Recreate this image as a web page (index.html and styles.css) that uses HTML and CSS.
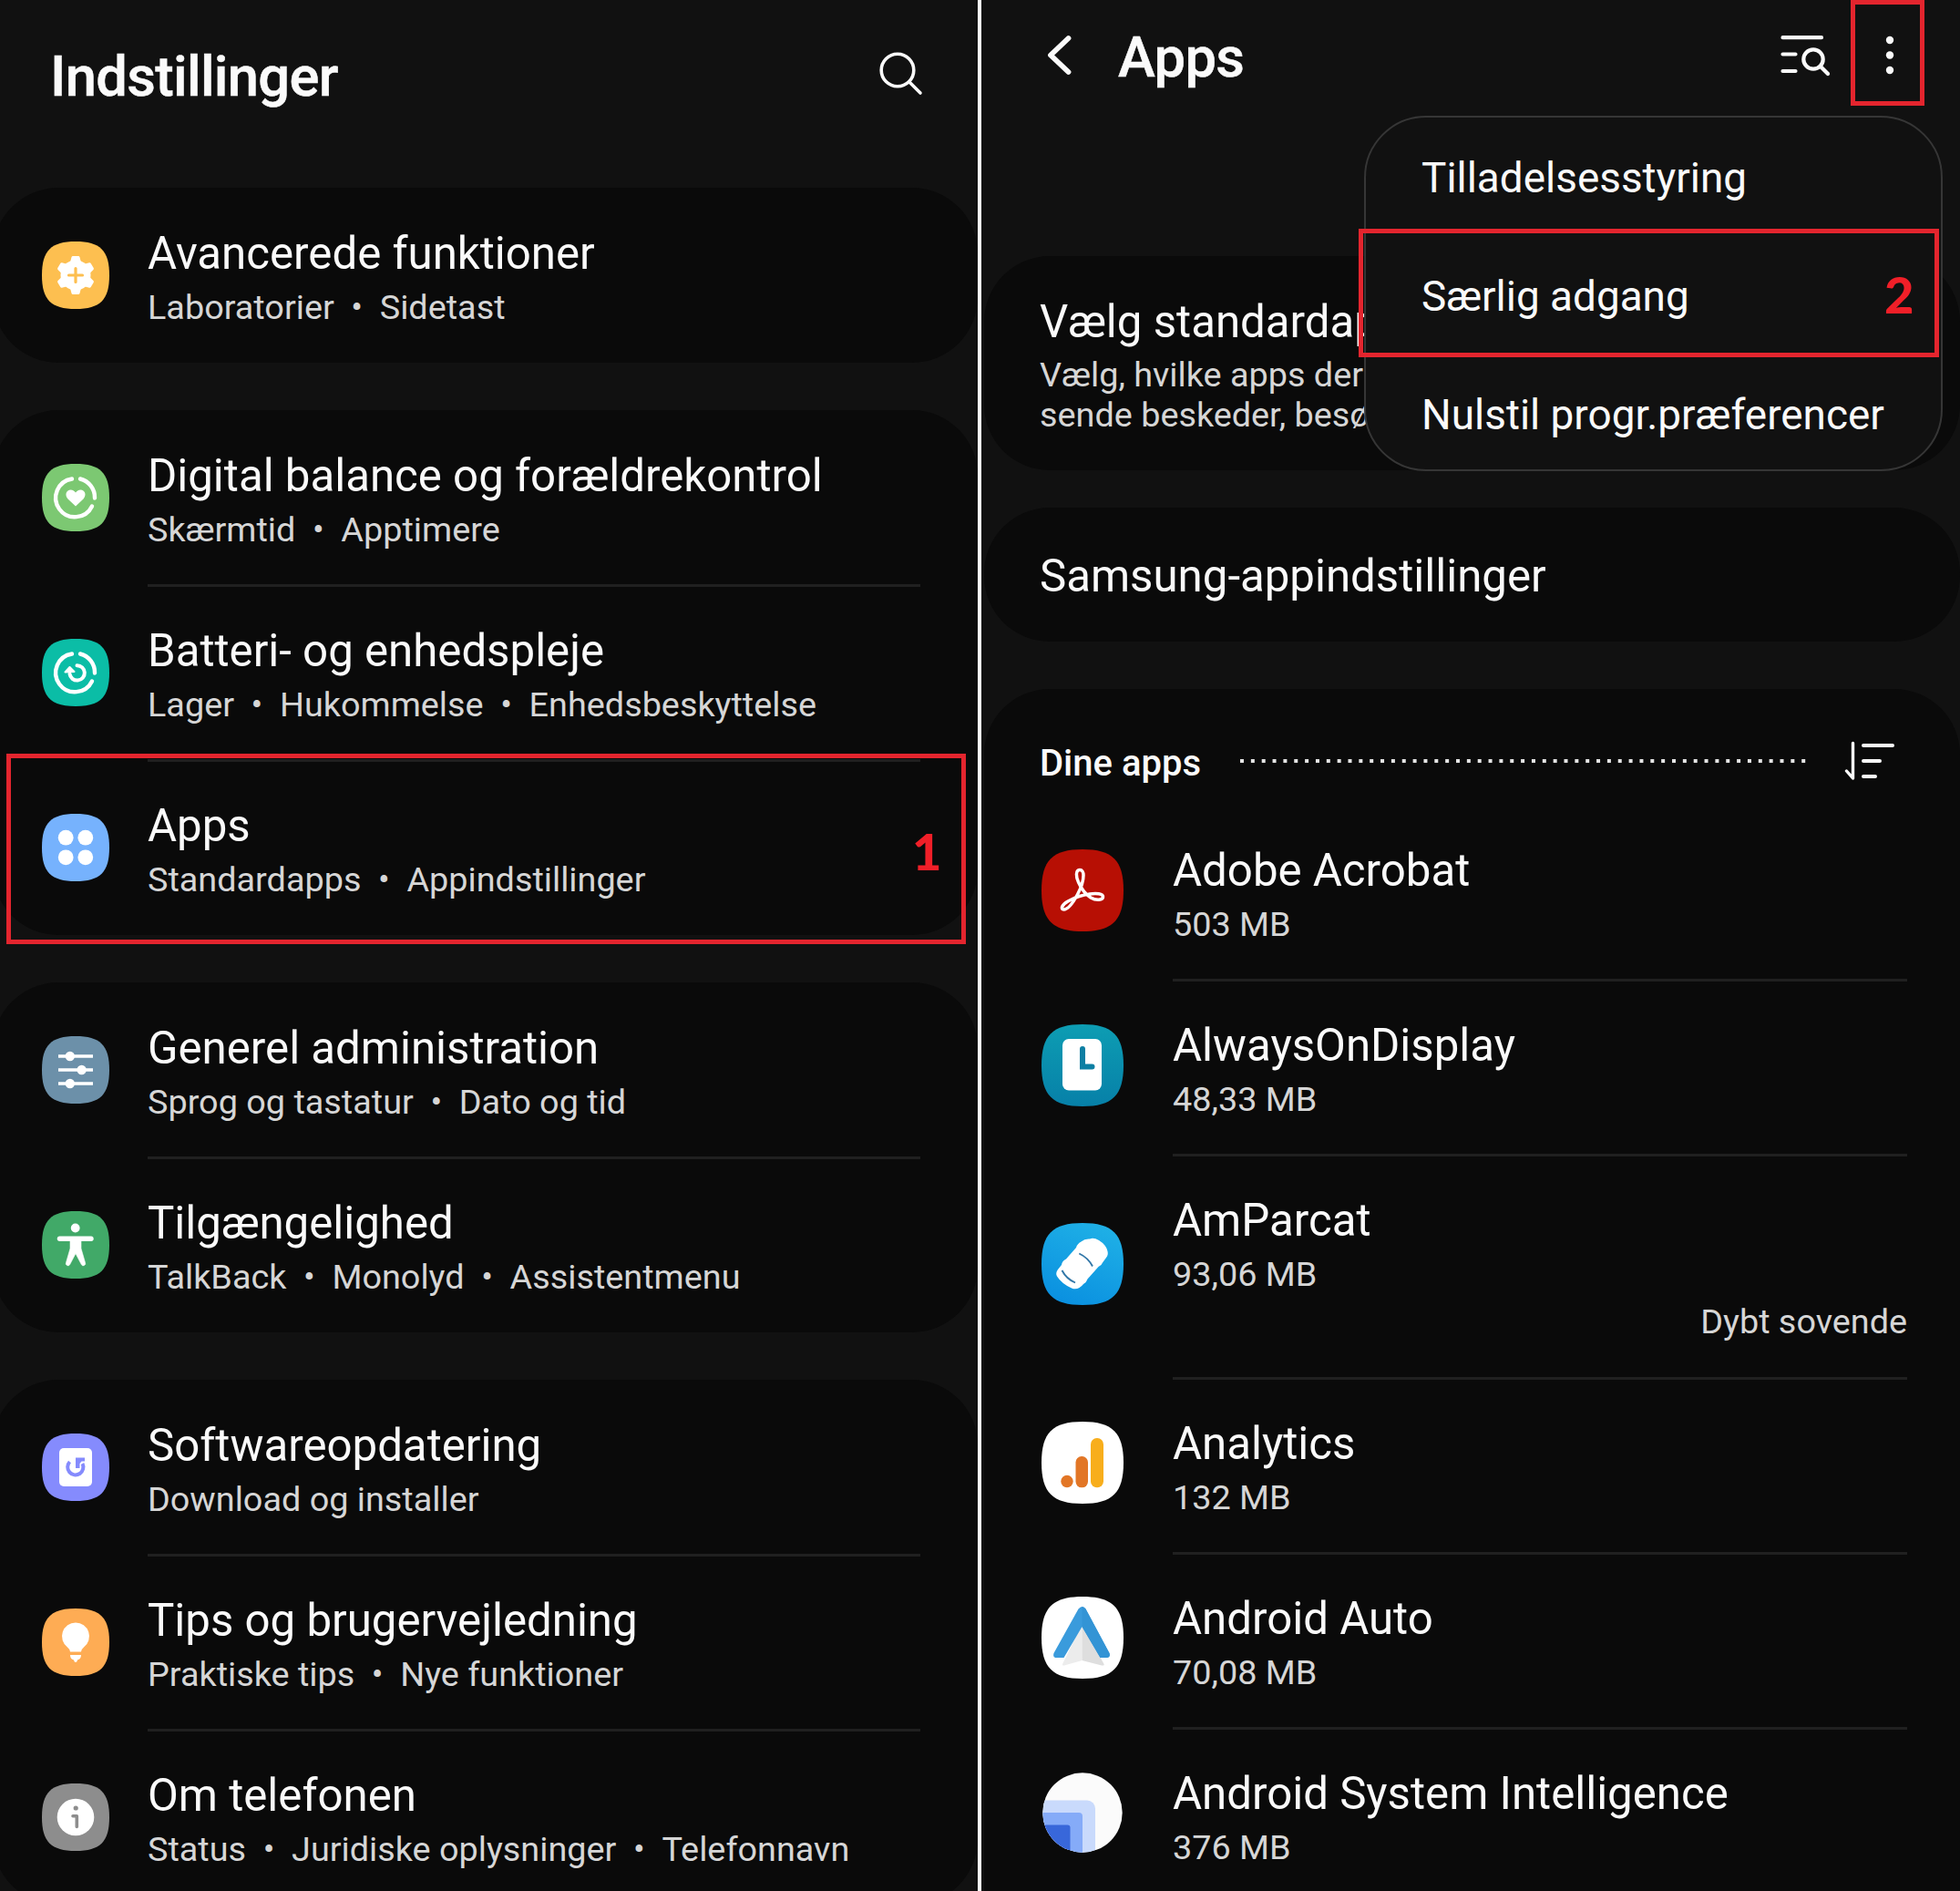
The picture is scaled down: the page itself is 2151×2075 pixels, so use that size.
FILE: index.html
```html
<!DOCTYPE html>
<html lang="da">
<head>
<meta charset="utf-8">
<title>Indstillinger</title>
<link rel="stylesheet" href="styles.css">
</head>
<body>
<svg class="defs" width="0" height="0" aria-hidden="true">
  <defs>
    <symbol id="tile" viewBox="0 0 74 74"><path d="M37 0C64 0 74 10 74 37S64 74 37 74 0 64 0 37 10 0 37 0z"/></symbol>
    <linearGradient id="aod" x1="0" y1="0" x2="0" y2="1"><stop offset="0" stop-color="#0d9db3"/><stop offset="1" stop-color="#0780a8"/></linearGradient>
    <linearGradient id="car" x1="0.7" y1="0" x2="0.3" y2="1"><stop offset="0" stop-color="#1fb0e6"/><stop offset="1" stop-color="#0a90e0"/></linearGradient>
    <clipPath id="round"><circle cx="45" cy="45" r="43.7"/></clipPath>
  </defs>
</svg>
<main class="screens">
  <section class="pane settings">
    <header class="bar">
      <h1 class="heading">Indstillinger</h1>
      <svg class="search" width="48" height="48" viewBox="0 0 48 48" fill="none" stroke="#fafafa" stroke-width="3.6" stroke-linecap="round"><circle cx="20" cy="20" r="17.8"/><path d="M33 33L45 45"/></svg>
    </header>

    <div class="card">
      <div class="row">
        <svg class="icon" viewBox="0 0 74 74"><use href="#tile" fill="#fdbf50"/><circle cx="37" cy="37" r="16.500" fill="#fff"/><path d="M34 17.500H40L42 25H32zM34 56.500H40L42 49H32z" fill="#fff" stroke="#fff" stroke-width="3" stroke-linejoin="round"/><path d="M34 17.500H40L42 25H32zM34 56.500H40L42 49H32z" transform="rotate(60 37 37)" fill="#fff" stroke="#fff" stroke-width="3" stroke-linejoin="round"/><path d="M34 17.500H40L42 25H32zM34 56.500H40L42 49H32z" transform="rotate(120 37 37)" fill="#fff" stroke="#fff" stroke-width="3" stroke-linejoin="round"/><path d="M37 29.500V44.500M29.500 37H44.500" stroke="#fdbf50" stroke-width="3.200" stroke-linecap="round"/></svg>
        <div class="body"><p class="title">Avancerede funktioner</p><p class="sub">Laboratorier<i>•</i>Sidetast</p></div>
      </div>
    </div>

    <div class="card">
      <div class="row">
        <svg class="icon" viewBox="0 0 74 74"><use href="#tile" fill="#7cc872"/><g fill="none" stroke="#fff" stroke-width="4.400" stroke-linecap="round"><path d="M42 16.500A21 21 0 0 1 58 37.500M55 46.500A21 21 0 1 1 33 16.500"/></g><path d="M37 46.500L28.500 38.500C24.500 34 27 28.500 31.500 28.500C34 28.500 36 30 37 31.500C38 30 40 28.500 42.500 28.500C47 28.500 49.500 34 45.500 38.500z" fill="#fff"/></svg>
        <div class="body"><p class="title">Digital balance og forældrekontrol</p><p class="sub">Skærmtid<i>•</i>Apptimere</p></div>
      </div>
      <div class="row">
        <svg class="icon" viewBox="0 0 74 74"><use href="#tile" fill="#0bbda6"/><g fill="none" stroke="#fff" stroke-width="4.400" stroke-linecap="round"><path d="M42 16.500A21 21 0 0 1 58 37.500M55 46.500A21 21 0 1 1 33 16.500"/><path d="M38.500 29.200A8.200 8.200 0 1 1 30.500 38.500" stroke-width="4"/></g><path d="M25.500 36.500L30.500 31L35.500 36z" fill="#fff" stroke="#fff" stroke-width="2" stroke-linejoin="round"/></svg>
        <div class="body"><p class="title">Batteri- og enhedspleje</p><p class="sub">Lager<i>•</i>Hukommelse<i>•</i>Enhedsbeskyttelse</p></div>
      </div>
      <div class="row">
        <svg class="icon" viewBox="0 0 74 74"><use href="#tile" fill="#76b2fd"/><g fill="#fff"><circle cx="26.200" cy="26.200" r="8.400"/><circle cx="47.800" cy="26.200" r="8.400"/><circle cx="26.200" cy="47.800" r="8.400"/><circle cx="47.800" cy="47.800" r="8.400"/></g></svg>
        <div class="body"><p class="title">Apps</p><p class="sub">Standardapps<i>•</i>Appindstillinger</p></div>
      </div>
    </div>

    <div class="card">
      <div class="row">
        <svg class="icon" viewBox="0 0 74 74"><use href="#tile" fill="#6c90a9"/><path d="M18 22H56M18 37H56M18 52H56" stroke="#fff" stroke-width="3.400"/><g fill="#fff"><circle cx="30.800" cy="22" r="5.200"/><circle cx="43.600" cy="37" r="5.200"/><circle cx="30.800" cy="52" r="5.200"/></g></svg>
        <div class="body"><p class="title">Generel administration</p><p class="sub">Sprog og tastatur<i>•</i>Dato og tid</p></div>
      </div>
      <div class="row">
        <svg class="icon" viewBox="0 0 74 74"><use href="#tile" fill="#41a968"/><circle cx="36.700" cy="18.500" r="4.900" fill="#fff"/><path d="M19.500 30.300H54" stroke="#fff" stroke-width="5.400" stroke-linecap="round"/><path d="M31 30H43V41L47.500 56.500A2.300 2.300 0 0 1 43.300 58.500L37 46.500L30.700 58.500A2.300 2.300 0 0 1 26.500 56.500L31 41z" fill="#fff" stroke="#fff" stroke-width=".6" stroke-linejoin="round"/></svg>
        <div class="body"><p class="title">Tilgængelighed</p><p class="sub">TalkBack<i>•</i>Monolyd<i>•</i>Assistentmenu</p></div>
      </div>
    </div>

    <div class="card">
      <div class="row">
        <svg class="icon" viewBox="0 0 74 74"><use href="#tile" fill="#858bfd"/><rect x="19" y="16" width="36" height="42" rx="5" fill="#fff"/><path d="M30.500 31A8.600 8.600 0 1 0 44.500 33" fill="none" stroke="#858bfd" stroke-width="4"/><path d="M37 26.500H47V30.500H43.500L41.500 33V38H37z" fill="#858bfd"/></svg>
        <div class="body"><p class="title">Softwareopdatering</p><p class="sub">Download og installer</p></div>
      </div>
      <div class="row">
        <svg class="icon" viewBox="0 0 74 74"><use href="#tile" fill="#feac54"/><path d="M37 15.500A15 15 0 0 1 46 42.500Q43 45 43 47.500H31Q31 45 28 42.500A15 15 0 0 1 37 15.500z" fill="#fff"/><path d="M31 51H43Q43 55.500 39 56.500Q38.500 59 37 59T35 56.500Q31 55.500 31 51z" fill="#fff"/></svg>
        <div class="body"><p class="title">Tips og brugervejledning</p><p class="sub">Praktiske tips<i>•</i>Nye funktioner</p></div>
      </div>
      <div class="row">
        <svg class="icon" viewBox="0 0 74 74"><use href="#tile" fill="#8d8d8d"/><circle cx="37" cy="37" r="20.300" fill="#fff"/><circle cx="37.200" cy="27" r="2.600" fill="#8d8d8d"/><path d="M34 35.800H38.300V47.500" fill="none" stroke="#8d8d8d" stroke-width="3.600" stroke-linecap="round" stroke-linejoin="round"/></svg>
        <div class="body"><p class="title">Om telefonen</p><p class="sub">Status<i>•</i>Juridiske oplysninger<i>•</i>Telefonnavn</p></div>
      </div>
    </div>

    <div class="mark mark-apps"><span>1</span></div>
  </section>

  <section class="pane apps">
    <header class="bar">
      <svg class="back" width="32" height="46" viewBox="0 0 32 46" fill="none" stroke="#fafafa" stroke-width="5.8" stroke-linecap="round" stroke-linejoin="round"><path d="M25.500 4L6 22.500L25.500 41"/></svg>
      <h2 class="heading">Apps</h2>
      <svg class="find" width="56" height="46" viewBox="0 0 56 46" fill="none" stroke="#fafafa" stroke-width="4.200" stroke-linecap="round"><path d="M3.500 3.200H46M3.500 21.500H17.500M3.500 40H17.500"/><circle cx="37" cy="27" r="10.700"/><path d="M45 35L53 43"/></svg>
      <svg class="more" width="10" height="44" viewBox="0 0 10 44" fill="#fafafa"><circle cx="5" cy="5" r="4.200"/><circle cx="5" cy="21.500" r="4.200"/><circle cx="5" cy="38" r="4.200"/></svg>
    </header>

    <div class="card plain defaults">
      <p class="title">Vælg standardapps</p>
      <p class="sub">Vælg, hvilke apps der<br>sende beskeder, besøge</p>
    </div>
    <div class="card plain samsung"><p class="title">Samsung-appindstillinger</p></div>

    <div class="card list">
      <div class="list-head">
        <h3 class="list-title">Dine apps</h3>
        <svg class="dots" width="622" height="4" viewBox="0 0 622 4"><path d="M0 2H622" stroke="#e4e4e4" stroke-width="4" stroke-dasharray="4 7.850"/></svg>
        <svg class="sort" width="56" height="44" viewBox="0 0 56 44" fill="none" stroke="#fafafa" stroke-width="4" stroke-linecap="round" stroke-linejoin="round"><path d="M2.500 33L9.500 41V2.500" stroke-width="3.400"/><path d="M21 5H53M21 22H39M21 39H34"/></svg>
      </div>
      <div class="row">
        <svg class="icon" viewBox="0 0 90 90"><use href="#tile" width="90" height="90" fill="#b70f04"/><path d="M42 22.500C37 22.500 38 31 40.500 36C44 44 48 49 54 53C60 56.500 67.500 56 67.500 52C67.500 48.500 60 48 53 49C45 50 36 53 29 57C22 61 20.500 66 24.500 66C30 66 36 56 39.500 49.500C43 43 46 34 46 28.500C46 25 44.500 22.500 42 22.500z" fill="none" stroke="#fff" stroke-width="3.500" stroke-linejoin="round"/></svg>
        <div class="body"><p class="title">Adobe Acrobat</p><p class="sub">503 MB</p></div>
      </div>
      <div class="row">
        <svg class="icon" viewBox="0 0 90 90"><use href="#tile" width="90" height="90" fill="url(#aod)"/><rect x="23" y="16" width="43" height="56.500" rx="7" fill="#fff"/><path d="M45 27V46.500H55.500" fill="none" stroke="#0d7fa3" stroke-width="6" stroke-linecap="round"/></svg>
        <div class="body"><p class="title">AlwaysOnDisplay</p><p class="sub">48,33 MB</p></div>
      </div>
      <div class="row tall">
        <svg class="icon" viewBox="0 0 90 90"><use href="#tile" width="90" height="90" fill="url(#car)"/><path d="M53 17.500Q57 15.500 63 19Q71 24 72.500 31Q73.500 35 71 38L67 43.500Q66 46.500 62.500 48L50.500 61.500Q49.500 65 46 67Q40 74.500 33 71.500Q22 66.500 17 58.500Q15 55 18 51L22 46Q22.500 41.500 27 39.500L38 27Q39 23 43.500 20.500Q47.500 17 53 17.500Z" fill="#fff"/><path d="M41.300 33.500Q51 38 56 47.500M22.500 52Q27 61 37 65.500" fill="none" stroke="#3277a8" stroke-width="1.900"/></svg>
        <div class="body"><p class="title">AmParcat</p><p class="sub">93,06 MB</p><p class="sub state">Dybt sovende</p></div>
      </div>
      <div class="row">
        <svg class="icon" viewBox="0 0 90 90"><use href="#tile" width="90" height="90" fill="#fff"/><circle cx="28" cy="65.500" r="6.700" fill="#e27626"/><rect x="37.500" y="38" width="13.500" height="34.300" rx="6.500" fill="#e27626"/><rect x="54" y="18" width="14" height="54.300" rx="6.800" fill="#f8ae1c"/></svg>
        <div class="body"><p class="title">Analytics</p><p class="sub">132 MB</p></div>
      </div>
      <div class="row">
        <svg class="icon" viewBox="0 0 90 90"><use href="#tile" width="90" height="90" fill="#fff"/><path d="M44.500 30V70L25 75.500Q22 76 23.500 73z" fill="#ececec"/><path d="M44.500 30V70L66 75.500Q70 76 68 73z" fill="#dedede"/><path d="M40.500 13.500Q44.500 8.500 48.500 13.500L74.500 62Q76 67 71 67H64.500L44.500 33L24.500 67H16.500Q12 67 13.500 62z" fill="#3a9bdc"/><path d="M44.500 11Q47 11 48.500 13.500L74.500 62Q76 67 71 67H64.500L44.500 33z" fill="#3394d5"/></svg>
        <div class="body"><p class="title">Android Auto</p><p class="sub">70,08 MB</p></div>
      </div>
      <div class="row">
        <svg class="icon" viewBox="0 0 90 90"><g clip-path="url(#round)"><rect width="90" height="90" fill="#fbfbfb"/><rect x="-20" y="31.500" width="79" height="90" rx="9" fill="#c9dafc"/><rect x="-20" y="45" width="65" height="80" rx="4" fill="#85abf8"/><rect x="-20" y="58.500" width="51.500" height="70" rx="3" fill="#3867da"/></g></svg>
        <div class="body"><p class="title">Android System Intelligence</p><p class="sub">376 MB</p></div>
      </div>
    </div>

    <nav class="menu">
      <a>Tilladelsesstyring</a>
      <a>Særlig adgang</a>
      <a>Nulstil progr.præferencer</a>
    </nav>
    <div class="mark mark-more"></div>
    <div class="mark mark-access"><span>2</span></div>
  </section>
</main>
</body>
</html>
```
FILE: styles.css
```css
* { box-sizing: border-box; margin: 0; padding: 0; }

body {
  width: 2151px;
  height: 2075px;
  overflow: hidden;
  background: #111;
  color: #fafafa;
  font-family: Roboto, "Liberation Sans", sans-serif;
}

.defs { position: absolute; }

.screens { display: flex; height: 2075px; }

.pane { position: relative; height: 2075px; overflow: hidden; }
.settings { width: 1077px; border-right: 4px solid #fff; }
.apps { width: 1074px; }

.bar { display: flex; align-items: flex-start; }
.heading {
  font-weight: 500;
  font-size: 61.500px;
  line-height: 72px;
  letter-spacing: -0.7px;
  white-space: nowrap;
  -webkit-text-stroke: 0.5px #fafafa;
}

.settings .bar { height: 206px; padding: 48px 60px 0 55px; justify-content: space-between; }
.search { margin-top: 9px; }

.apps .bar { height: 281px; padding: 27px 72px 0 70px; }
.back { margin: 11px 48px 0 0; }
.find { margin: 11px 60px 0 auto; }
.more { margin-top: 12px; }

.card { background: #0a0a0a; border-radius: 72px; overflow: hidden; }
.settings .card { margin: 0 0 52px -8px; padding: 0 63px 0 54px; }
.apps .card { margin: 0 0 0 3px; }

.row { display: flex; align-items: center; height: 192px; }
.row.tall { height: 244.500px; }
.icon { flex: none; width: 74px; height: 74px; margin: 0 42px 1px 0; }
.body {
  flex: 1;
  align-self: stretch;
  margin-bottom: -2px;
  padding-top: 43px;
  border-bottom: 3px solid #202020;
}
.row:last-child .body { border-bottom: 0; }

.title { font-size: 49.200px; line-height: 58px; white-space: nowrap; }
.sub { margin-top: 8px; font-size: 37.800px; line-height: 44px; color: #d6d6d6; white-space: nowrap; }
.sub i { display: inline-block; width: 50px; text-align: center; font-style: normal; }

.apps .plain { padding: 0 61px; }
.apps .defaults { height: 235px; padding-top: 43px; }
/* the open menu covers the rest of these lines */
.apps .defaults p { width: 358px; overflow: hidden; }
.apps .defaults .sub { margin-top: 7px; }
.apps .samsung { height: 147px; margin-top: 41px; padding-top: 46px; }
.apps .list { margin-top: 52px; padding: 0 58px 0 63px; border-radius: 72px 72px 0 0; height: 1400px; }

.list-head { display: flex; align-items: flex-start; height: 127px; margin-left: -2px; padding-right: 13px; }
.list-title { margin-top: 59px; font-size: 40px; line-height: 46px; font-weight: 500; white-space: nowrap; }
.dots { margin: 77px 0 0 auto; }
.sort { margin: 57px 0 0 41px; }
.list .icon { width: 90px; height: 90px; margin: 0 54px 5px 0; }
.state { text-align: right; }

.menu {
  position: absolute;
  left: 420px;
  top: 127px;
  width: 635px;
  height: 390px;
  padding: 1px 0 0 61px;
  border: 2px solid #363636;
  border-radius: 68px;
  background: #111;
}
.menu a { display: block; height: 129.800px; line-height: 130px; font-size: 45.900px; white-space: nowrap; }

.mark { position: absolute; border: 5px solid #e4252e; }
.mark span {
  position: absolute;
  font: 900 56px/56px Lato, "Noto Sans", sans-serif;
  color: #f11f28;
}
.mark-apps { left: 7px; top: 827px; width: 1053px; height: 209px; }
.mark-apps span { left: 989px; top: 74px; }
.mark-more { left: 954px; top: 0; width: 81px; height: 116px; }
.mark-access { left: 414px; top: 251px; width: 637px; height: 141px; }
.mark-access span { left: 572px; top: 39px; }
```
